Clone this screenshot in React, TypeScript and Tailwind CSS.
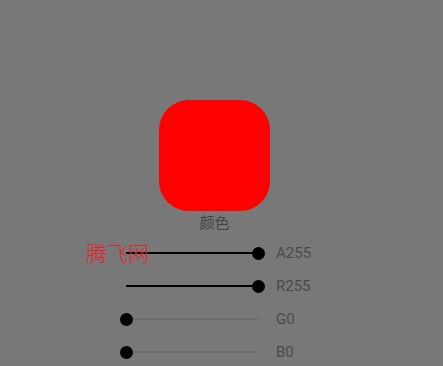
import React from "react";

const rows = [
  { label: "A255", value: 255 },
  { label: "R255", value: 255 },
  { label: "G0", value: 0 },
  { label: "B0", value: 0 },
];

function Slider({ value, label }: { value: number; label: string }) {
  const pct = (value / 255) * 100;
  return (
    <div className="flex items-center h-[33px]">
      <div className="relative w-[144px] h-[13px] ml-[120px]">
        <div className="absolute left-[6px] right-[6px] top-[5px] h-[2px] bg-[#6c6c6c]" />
        <div
          className="absolute left-[6px] top-[5px] h-[2px] bg-black"
          style={{ width: `${(pct / 100) * 132}px` }}
        />
        <div
          className="absolute top-0 w-[13px] h-[13px] rounded-full bg-black"
          style={{ left: `${(pct / 100) * 132}px` }}
        />
      </div>
      <span
        className="ml-[12px] text-[15px] text-[#4a4a4a] leading-none"
        style={{ fontFamily: "Roboto, 'Noto Sans', sans-serif" }}
      >
        {label}
      </span>
    </div>
  );
}

export default function App() {
  return (
    <div className="relative w-[443px] h-[366px] bg-[#787878] overflow-hidden">
      <div className="pt-[100px] w-[429px] flex flex-col items-center">
        <div className="w-[111px] h-[111px] rounded-[30px] bg-[#ff0000]" />
        <div
          className="mt-[1px] text-[15px] leading-[20px] text-[#444]"
          style={{ fontFamily: "'Noto Sans CJK SC', sans-serif" }}
        >
          颜色
        </div>
      </div>
      <div className="flex flex-col mt-[5px]">
        {rows.map((r) => (
          <Slider key={r.label} value={r.value} label={r.label} />
        ))}
      </div>
      <div
        className="absolute left-[86px] top-[239px] text-[21px] leading-[26px] text-[#e8202a] font-light"
        style={{ fontFamily: "'Noto Sans CJK SC', sans-serif" }}
      >
        腾飞网
      </div>
    </div>
  );
}
